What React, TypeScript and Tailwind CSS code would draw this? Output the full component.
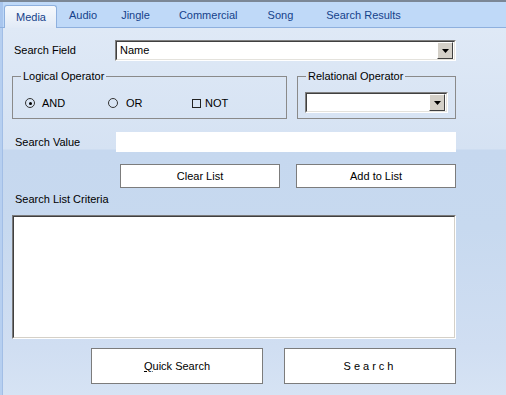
import React from "react";

const font = { fontFamily: '"Liberation Sans", Arial, sans-serif' };

function Arrow() {
  return (
    <div className="w-[16px] h-[17px] bg-[#d4d0c8] border-t border-l border-t-[#ffffff] border-l-[#ffffff] border-b border-r border-b-[#404040] border-r-[#404040] flex items-center justify-center">
      <svg width="7" height="4" viewBox="0 0 7 4">
        <path d="M0 0 H7 L3.5 4 Z" fill="#000" />
      </svg>
    </div>
  );
}

function Combo({ text, className }: { text?: string; className: string }) {
  return (
    <div className={`${className} border-t border-l border-t-[#808080] border-l-[#808080] border-b border-r border-b-[#ffffff] border-r-[#ffffff]`}>
      <div className="w-full h-full bg-white border-t border-l border-t-[#404040] border-l-[#404040] border-b border-r border-b-[#e4e2dc] border-r-[#e4e2dc] flex items-center justify-between pl-[3px] pr-[1px]">
        <span className="text-[11px] text-black leading-none">{text}</span>
        <Arrow />
      </div>
    </div>
  );
}

function Btn({ children, className }: { children: React.ReactNode; className: string }) {
  return (
    <div className={`${className} bg-white border border-[#7c7c7c] flex items-center justify-center text-[11px] text-black`}>
      {children}
    </div>
  );
}

export default function App() {
  return (
    <div className="w-[506px] h-[395px] overflow-hidden flex flex-col bg-[#bcd6f6]" style={font}>
      <div className="h-[2px] bg-[#7b8796]" />
      {/* tab strip */}
      <div className="h-[26px] flex items-end border-b border-[#8eb0de] bg-[#bfd9f8]">
        <div className="w-[3px] h-full bg-[#a9c6ee]" />
        <div className="ml-[1px] w-[53px] h-[23px] -mb-px rounded-t-[3px] border border-b-0 border-[#8eb0de] bg-gradient-to-b from-[#f6f9fd] to-[#e1eaf6] flex items-center pl-[11px] text-[11px] text-[#15428b]">
          Media
        </div>
        <div className="flex-1 h-[23px] flex items-center text-[11px] text-[#15428b]">
          <div className="ml-[12px]">Audio</div>
          <div className="ml-[24px]">Jingle</div>
          <div className="ml-[29px]">Commercial</div>
          <div className="ml-[30px]">Song</div>
          <div className="ml-[33px]">Search Results</div>
        </div>
      </div>
      {/* body */}
      <div className="flex-1 flex">
        <div className="w-[3px] bg-[#b6cff0] border-r border-[#a2bee6]" />
        <div
          className="flex-1 flex flex-col pt-[12px]"
          style={{
            background:
              "linear-gradient(to bottom, #dfe9f6 0px, #d5e2f3 121px, #c6d8ef 122px, #c7d9ef 200px, #d0def2 320px, #d6e3f4 367px)",
          }}
        >
          {/* Search Field */}
          <div className="h-[21px] flex items-center">
            <div className="w-[112px] pl-[11px] text-[11px] text-black">Search Field</div>
            <Combo text="Name" className="w-[341px] h-[21px]" />
          </div>
          {/* groups */}
          <div className="mt-[15px] h-[43px] flex">
            <div className="ml-[9px] w-[275px] h-full border border-[#8a8a8a] relative">
              <div className="absolute -top-[7px] left-[8px] px-[2px] bg-[#dbe6f5] text-[11px] text-black leading-[13px]">
                Logical Operator
              </div>
              <div className="absolute top-[21px] left-[12px] h-[10px] flex items-center">
                <div className="w-[10px] h-[10px] rounded-full border border-[#333] flex items-center justify-center">
                  <div className="w-[3px] h-[3px] rounded-full bg-black" />
                </div>
                <div className="ml-[7px] text-[11px] leading-[12px] text-black">AND</div>
              </div>
              <div className="absolute top-[21px] left-[95px] h-[10px] flex items-center">
                <div className="w-[10px] h-[10px] rounded-full border border-[#333]" />
                <div className="ml-[8px] text-[11px] leading-[12px] text-black">OR</div>
              </div>
              <div className="absolute top-[21px] left-[179px] h-[10px] flex items-center">
                <div className="w-[9px] h-[9px] border border-[#222]" />
                <div className="ml-[4px] text-[11px] leading-[12px] text-black">NOT</div>
              </div>
            </div>
            <div className="ml-[10px] w-[159px] h-full border border-[#8a8a8a] relative">
              <div className="absolute -top-[7px] left-[8px] px-[2px] bg-[#dbe6f5] text-[11px] text-black leading-[13px]">
                Relational Operator
              </div>
              <Combo className="absolute top-[15px] left-[7px] w-[143px] h-[21px]" />
            </div>
          </div>
          {/* Search Value */}
          <div className="mt-[13px] h-[20px] flex items-center">
            <div className="w-[113px] pl-[12px] text-[11px] text-black">Search Value</div>
            <div className="w-[340px] h-[20px] bg-white" />
          </div>
          {/* Clear / Add */}
          <div className="mt-[12px] h-[24px] flex">
            <Btn className="ml-[117px] w-[160px] h-full">Clear List</Btn>
            <Btn className="ml-[16px] w-[160px] h-full">Add to List</Btn>
          </div>
          <div className="mt-[4px] h-[14px] pl-[12px] text-[11px] text-black flex items-center">Search List Criteria</div>
          {/* list */}
          <div className="mt-[9px] ml-[9px] w-[444px] h-[124px] border-t border-l border-t-[#7a7a7a] border-l-[#7a7a7a] border-b border-r border-b-[#ffffff] border-r-[#ffffff]">
            <div className="w-full h-full bg-white border-t border-l border-t-[#404040] border-l-[#404040] border-b border-r border-b-[#d4d0c8] border-r-[#d4d0c8]" />
          </div>
          {/* bottom buttons */}
          <div className="mt-[9px] h-[36px] flex">
            <Btn className="ml-[88px] w-[172px] h-full">
              <span>
                <span className="underline">Q</span>uick Search
              </span>
            </Btn>
            <Btn className="ml-[21px] w-[172px] h-full">
              <span className="tracking-[3px]">Search</span>
            </Btn>
          </div>
        </div>
      </div>
    </div>
  );
}
